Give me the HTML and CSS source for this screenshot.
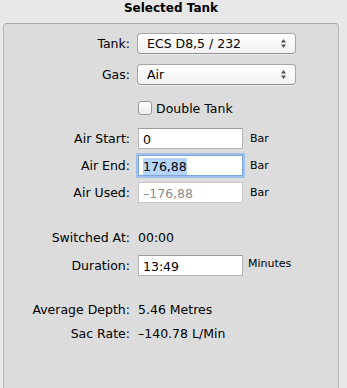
FILE: index.html
```html
<!DOCTYPE html>
<html lang="en">
<head>
    <meta charset="UTF-8">
    <meta name="viewport" content="width=device-width, initial-scale=1.0">
    <title>Selected Tank</title>
    <link rel="stylesheet" href="styles.css">
</head>
<body>
    <h1 class="title">Selected Tank</h1>

    <div class="panel">
        <div class="row row-tank">
            <span class="label">Tank:</span>
            <div class="popup">
                <span>ECS D8,5 / 232</span>
                <svg class="arrows" width="7" height="11" viewBox="0 0 7 11"><path d="M3.5 1 L6 4.5 L1 4.5 Z M3.5 10 L6 6.5 L1 6.5 Z" fill="#555"/></svg>
            </div>
        </div>

        <div class="row row-gas">
            <span class="label">Gas:</span>
            <div class="popup">
                <span>Air</span>
                <svg class="arrows" width="7" height="11" viewBox="0 0 7 11"><path d="M3.5 1 L6 4.5 L1 4.5 Z M3.5 10 L6 6.5 L1 6.5 Z" fill="#555"/></svg>
            </div>
        </div>

        <div class="row row-check">
            <span class="label"></span>
            <span class="checkbox"></span>
            <span class="check-text">Double Tank</span>
        </div>

        <div class="row row-start">
            <span class="label">Air Start:</span>
            <div class="field">0</div>
            <span class="unit">Bar</span>
        </div>

        <div class="row row-air">
            <span class="label">Air End:</span>
            <div class="field focused"><span class="selected">176,88</span></div>
            <span class="unit">Bar</span>
        </div>

        <div class="row row-air">
            <span class="label">Air Used:</span>
            <div class="field disabled">–176,88</div>
            <span class="unit">Bar</span>
        </div>

        <div class="row row-switched">
            <span class="label">Switched At:</span>
            <span class="value">00:00</span>
        </div>

        <div class="row row-duration">
            <span class="label">Duration:</span>
            <div class="field">13:49</div>
            <span class="unit unit-top">Minutes</span>
        </div>

        <div class="row row-depth">
            <span class="label">Average Depth:</span>
            <span class="value">5.46 Metres</span>
        </div>

        <div class="row row-sac">
            <span class="label">Sac Rate:</span>
            <span class="value">–140.78 L/Min</span>
        </div>
    </div>
</body>
</html>
```

FILE: styles.css
```css
body {
    margin: 0;
    width: 347px;
    height: 388px;
    background-color: #e8e8e8;
    font-family: "DejaVu Sans", sans-serif;
    font-size: 12.5px;
    color: #000;
    overflow: hidden;
}
.title {
    margin: 0;
    width: 342px;
    height: 23px;
    line-height: 17px;
    text-align: center;
    font-size: 12px;
    font-weight: bold;
    color: #000;
}
.panel {
    margin-left: 3px;
    width: 334px;
    height: 361px;
    background-color: #dcdcdc;
    border: 1px solid #b8b8b8;
    border-top-color: #a9a9a9;
    border-radius: 4px;
    padding-top: 9px;
    box-sizing: content-box;
}
.row {
    display: flex;
    align-items: center;
    gap: 7px;
    height: 21px;
}
.label {
    width: 126px;
    flex-shrink: 0;
    text-align: right;
}
.row-gas {
    margin-top: 10px;
}
.row-check {
    margin-top: 16px;
    height: 14px;
}
.row-start {
    margin-top: 13px;
}
.row-air {
    margin-top: 6px;
}
.row-switched {
    margin-top: 26px;
    height: 16px;
}
.row-duration {
    margin-top: 10px;
}
.row-depth {
    margin-top: 25px;
    height: 16px;
}
.row-sac {
    margin-top: 8px;
    height: 16px;
}
.popup {
    width: 159px;
    height: 21px;
    box-sizing: border-box;
    display: flex;
    align-items: center;
    justify-content: space-between;
    padding: 0 8px 0 9px;
    background: linear-gradient(#ffffff, #f2f2f2);
    border: 1px solid #a6a6a6;
    border-bottom-color: #8f8f8f;
    border-radius: 4px;
    box-shadow: 0 1px 0 rgba(255, 255, 255, 0.5);
}
.arrows {
    display: block;
}
.checkbox {
    width: 14px;
    height: 14px;
    box-sizing: border-box;
    margin-left: 1px;
    background: linear-gradient(#ffffff, #ececec);
    border: 1px solid #999;
    border-radius: 3px;
}
.check-text {
    margin-left: -3px;
}
.field {
    width: 105px;
    height: 21px;
    box-sizing: border-box;
    margin-left: 1px;
    padding: 2px 4px 0;
    line-height: 17px;
    background-color: #fff;
    border: 1px solid #b5b5b5;
    border-top-color: #9c9c9c;
}
.field.focused {
    border-color: #7ea6d8;
    box-shadow: 0 0 0 2px #9fc0ea;
}
.selected {
    background-color: #b5d4fb;
    padding: 1px 0;
}
.field.disabled {
    color: #8c8c8c;
    border-color: #c8c8c8;
}
.unit {
    font-size: 11px;
    margin-left: 0;
}
.unit-top {
    align-self: flex-start;
    margin-top: 2px;
    margin-left: -2px;
}
.value {
    margin-left: 1px;
}
```
